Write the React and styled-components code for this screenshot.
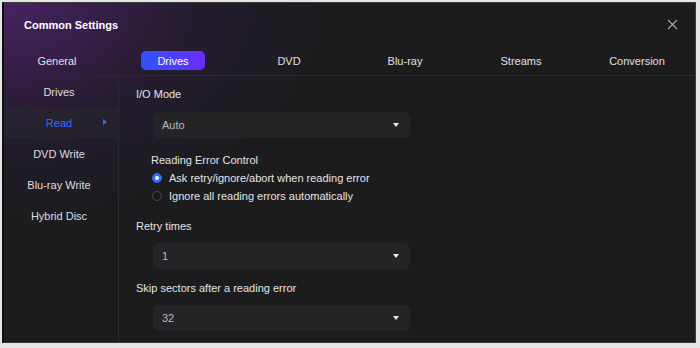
import { useState } from "react";
import styled, { createGlobalStyle } from "styled-components";

const GlobalStyle = createGlobalStyle`
  html, body {
    margin: 0;
    padding: 0;
    background: #e6e6e6;
  }
  body {
    font-family: Arial, "Liberation Sans", sans-serif;
  }
`

const tabs = ["General", "Drives", "DVD", "Blu-ray", "Streams", "Conversion"]
const sideItems = ["Drives", "Read", "DVD Write", "Blu-ray Write", "Hybrid Disc"]

export default function App() {
  const [tab, setTab] = useState("Drives")
  const [side, setSide] = useState("Read")
  const [mode, setMode] = useState("ask")

  return (
    <>
      <GlobalStyle />
      <Window>
        <Header>
          <Title>Common Settings</Title>
          <Close aria-label="close">
            <svg width="11" height="11" viewBox="0 0 11 11">
              <path d="M1 1 L10 10 M10 1 L1 10" stroke="#a9a9ad" strokeWidth="1.1" />
            </svg>
          </Close>
        </Header>

        <Tabs>
          {tabs.map((t) => (
            <TabCell key={t}>
              <Tab active={t === tab} onClick={() => setTab(t)}>{t}</Tab>
            </TabCell>
          ))}
        </Tabs>

        <Body>
          <Sidebar>
            {sideItems.map((s) => (
              <SideItem key={s} active={s === side} onClick={() => setSide(s)}>
                {s}
                {s === side && <Arrow />}
              </SideItem>
            ))}
          </Sidebar>

          <Content>
            <Label>I/O Mode</Label>
            <Select style={{ marginTop: 10 }}>Auto<Caret /></Select>

            <Group>
              <GroupTitle>Reading Error Control</GroupTitle>
              <RadioRow onClick={() => setMode("ask")}>
                <Radio checked={mode === "ask"} />
                Ask retry/ignore/abort when reading error
              </RadioRow>
              <RadioRow onClick={() => setMode("ignore")}>
                <Radio checked={mode === "ignore"} />
                Ignore all reading errors automatically
              </RadioRow>
            </Group>

            <Label style={{ marginTop: 13 }}>Retry times</Label>
            <Select style={{ marginTop: 9 }}>1<Caret /></Select>

            <Label style={{ marginTop: 11 }}>Skip sectors after a reading error</Label>
            <Select style={{ marginTop: 9 }}>32<Caret /></Select>
          </Content>
        </Body>
      </Window>
    </>
  )
}

const Window = styled.div`
  margin: 2px 4px 0 2px;
  height: 341px;
  box-sizing: border-box;
  border: 1px solid #3b3b3e;
  border-left: 2px solid #101012;
  display: flex;
  flex-direction: column;
  color: #e2e2e4;
  font-size: 11px;
  background:
    radial-gradient(ellipse 320px 210px at 0 0, rgba(86, 36, 120, 0.75), rgba(60, 28, 90, 0.25) 60%, transparent 100%),
    #1c1c1f;
  overflow: hidden;
`
const Header = styled.div`
  height: 43px;
  display: flex;
  align-items: center;
  justify-content: space-between;
  padding: 0 17px 0 20px;
`
const Title = styled.div`
  font-weight: bold;
  font-size: 11px;
  color: #ffffff;
`
const Close = styled.div`
  width: 11px;
  height: 11px;
  display: flex;
  cursor: pointer;
`
const Tabs = styled.div`
  height: 29px;
  margin-left: -5px;
  display: grid;
  grid-template-columns: repeat(6, 1fr);
  border-bottom: 1px solid #2b2b30;
`
const TabCell = styled.div`
  display: flex;
  align-items: center;
  justify-content: center;
`
const Tab = styled.div`
  height: 19px;
  width: ${(p) => (p.active ? "64px" : "auto")};
  border-radius: 5px;
  display: flex;
  align-items: center;
  justify-content: center;
  color: ${(p) => (p.active ? "#ffffff" : "#e0e0e2")};
  background: ${(p) => (p.active ? "linear-gradient(90deg, #2f52ff, #6a2dfb)" : "transparent")};
  cursor: pointer;
`
const Body = styled.div`
  flex: 1;
  display: flex;
  min-height: 0;
`
const Sidebar = styled.div`
  width: 114px;
  border-right: 1px solid #2b2b30;
  display: flex;
  flex-direction: column;
`
const SideItem = styled.div`
  position: relative;
  height: 31px;
  display: flex;
  align-items: center;
  justify-content: center;
  padding-right: 4px;
  color: ${(p) => (p.active ? "#2f6dff" : "#dedee0")};
  background: ${(p) => (p.active ? "rgba(40, 40, 50, 0.55)" : "transparent")};
  cursor: pointer;
`
const Arrow = styled.span`
  position: absolute;
  right: 11px;
  top: 12px;
  width: 0;
  height: 0;
  border-top: 3.5px solid transparent;
  border-bottom: 3.5px solid transparent;
  border-left: 4px solid #2f6dff;
`
const Content = styled.div`
  flex: 1;
  padding: 10px 0 0 17px;
  display: flex;
  flex-direction: column;
`
const Label = styled.div`
  line-height: 16px;
  color: #e4e4e6;
`
const Select = styled.div`
  margin-left: 17px;
  width: 257px;
  height: 26px;
  box-sizing: border-box;
  border-radius: 6px;
  background: #252528;
  color: #b9b9bd;
  display: flex;
  align-items: center;
  justify-content: space-between;
  padding: 0 11px 0 9px;
  cursor: pointer;
`
const Caret = styled.span`
  width: 0;
  height: 0;
  border-left: 3.5px solid transparent;
  border-right: 3.5px solid transparent;
  border-top: 4px solid #ececee;
`
const Group = styled.div`
  margin: 14px 0 0 15px;
  display: flex;
  flex-direction: column;
`
const GroupTitle = styled.div`
  line-height: 16px;
  margin-bottom: 1px;
  color: #e4e4e6;
`
const RadioRow = styled.div`
  height: 18px;
  display: flex;
  align-items: center;
  gap: 7px;
  padding-left: 1px;
  color: #e4e4e6;
  cursor: pointer;
`
const Radio = styled.span`
  width: 10px;
  height: 10px;
  box-sizing: border-box;
  border-radius: 50%;
  background: ${(p) => (p.checked ? "#2f6dff" : "#1a1a1c")};
  border: 1px solid ${(p) => (p.checked ? "#2f6dff" : "#4a4a4e")};
  display: flex;
  align-items: center;
  justify-content: center;
  &::after {
    content: "";
    width: 4px;
    height: 4px;
    border-radius: 50%;
    background: #ffffff;
    display: ${(p) => (p.checked ? "block" : "none")};
  }
`
